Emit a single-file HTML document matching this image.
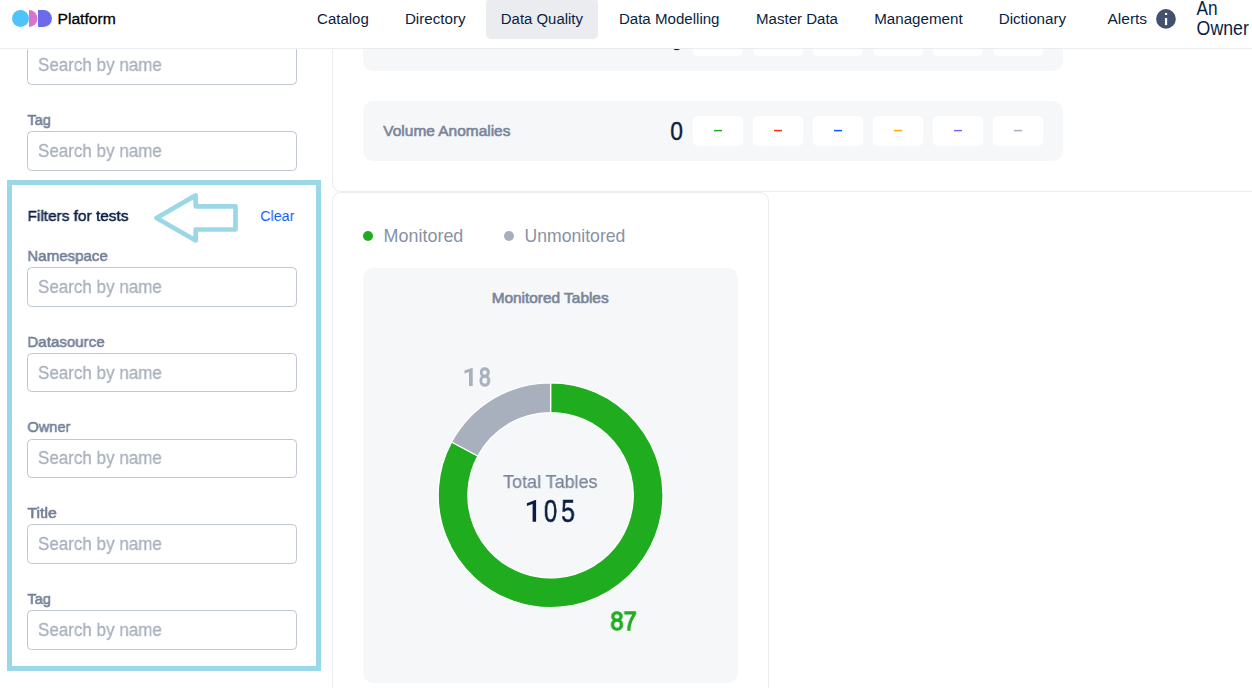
<!DOCTYPE html>
<html><head><meta charset="utf-8">
<style>
*{box-sizing:border-box;margin:0;padding:0}
html,body{width:1252px;height:688px;overflow:hidden;background:#fff}
body{font-family:"Liberation Sans",sans-serif;position:relative;color:#091E42}
.t{position:absolute;white-space:nowrap;line-height:1;transform-origin:0 0}
svg{position:absolute;left:0;top:0;overflow:visible}
#hdr{position:absolute;left:0;top:0;width:1252px;height:49px;background:#fff;border-bottom:1px solid #EBECF0}
#active{position:absolute;left:486px;top:-2px;width:112px;height:41px;background:#EBECF0;border-radius:5px}
  .inp{position:absolute;left:27px;width:270px;border:1px solid #C1C7D0;border-radius:4.5px;background:#fff}
#hl{position:absolute;left:7px;top:180px;width:314px;height:491px;border:5px solid #9AD8E8}
.card{position:absolute;border:1px solid #EBECF0;background:#fff}
.gbox{position:absolute;background:#F6F7F9;border-radius:10px}
.chip{position:absolute;top:116px;width:50px;height:30px;background:#fff;border-radius:5px}
.chip i{position:absolute;left:21px;top:13.7px;width:8px;height:1.8px;display:block}
.dot{position:absolute;width:10px;height:10px;border-radius:50%;top:231px}
</style></head><body>

<div class="card" style="left:332px;top:-20px;width:940px;height:212px;border-radius:0 0 0 9px"></div>
<div class="card" style="left:332px;top:192px;width:437px;height:520px;border-radius:9px 9px 0 0"></div>
<div class="gbox" style="left:363px;top:11px;width:700px;height:60px"></div>
<div class="chip" style="left:693px;top:26px"></div>
<div class="chip" style="left:753px;top:26px"></div>
<div class="chip" style="left:813px;top:26px"></div>
<div class="chip" style="left:873px;top:26px"></div>
<div class="chip" style="left:933px;top:26px"></div>
<div class="chip" style="left:993px;top:26px"></div>
<div class="t" style="left:670px;top:28px;font-size:26px;color:#091E42;transform:translate(0.18px,0px) scaleX(0.8766);-webkit-text-stroke:0.4px #091E42;">0</div>
<div class="gbox" style="left:363px;top:101px;width:700px;height:60px"></div>
<div class="t" style="left:383px;top:124px;font-size:14.9px;color:#7A869A;transform:translate(0.31px,-0.2px) scaleX(1.0377);-webkit-text-stroke:0.6px #7A869A;">Volume Anomalies</div>
<div class="t" style="left:670px;top:118px;font-size:26px;color:#091E42;transform:translate(0.18px,0px) scaleX(0.8766);-webkit-text-stroke:0.4px #091E42;">0</div>
<div class="chip" style="left:693px"></div>
<div class="chip" style="left:753px"></div>
<div class="chip" style="left:813px"></div>
<div class="chip" style="left:873px"></div>
<div class="chip" style="left:933px"></div>
<div class="chip" style="left:993px"></div>
<svg width="1252" height="200" viewBox="0 0 1252 200"><rect x="714" y="129.85" width="8" height="1.5" fill="#1FAD1F"/><rect x="774" y="129.85" width="8" height="1.5" fill="#F2330D"/><rect x="834" y="129.85" width="8" height="1.5" fill="#0B5CFF"/><rect x="894" y="129.85" width="8" height="1.5" fill="#FFAA00"/><rect x="954" y="129.85" width="8" height="1.5" fill="#8066FF"/><rect x="1014" y="129.85" width="8" height="1.5" fill="#A8B0BD"/></svg>
<div class="dot" style="left:363px;background:#1FAD1F"></div>
<div class="t" style="left:383px;top:226px;font-size:19px;color:#8792A5;transform:translate(0.60px,0px) scaleX(0.9437);">Monitored</div>
<div class="dot" style="left:504px;background:#A8B0BD"></div>
<div class="t" style="left:524px;top:226px;font-size:19px;color:#8792A5;transform:translate(0.60px,0px) scaleX(0.9258);">Unmonitored</div>
<div class="gbox" style="left:363px;top:268px;width:375px;height:415px"></div>
<div class="t" style="left:491px;top:291px;font-size:14.9px;color:#7A869A;transform:translate(0.64px,0px) scaleX(1.0341);-webkit-text-stroke:0.65px #7A869A;">Monitored Tables</div>
<svg width="1252" height="688" viewBox="0 0 1252 688"><path d="M550.60 382.80 A112.4 112.4 0 1 1 451.62 441.94 L477.77 456.01 A82.7 82.7 0 1 0 550.60 412.50 Z" fill="#1FAD1F" stroke="#fff" stroke-width="1.25"/><path d="M550.60 382.80 A112.4 112.4 0 0 0 451.62 441.94 L477.77 456.01 A82.7 82.7 0 0 1 550.60 412.50 Z" fill="#A8B0BD" stroke="#fff" stroke-width="1.25"/></svg>
<svg width="1252" height="688" viewBox="0 0 1252 688"><polygon points="472.7,385.9 469,385.9 469,372 464.5,373.6 464.5,370.6 471.8,367.9 472.7,367.9" fill="#A8B0BD"/><polygon points="536.1,521.8 532.6,521.8 532.6,503.9 526.9,505.9 526.9,503.2 535.2,499.9 536.1,499.9" fill="#091E42"/></svg>
<div class="t" style="left:479px;top:365px;font-size:25px;color:#A8B0BD;transform:translate(0.04px,0px) scaleX(0.8237);-webkit-text-stroke:1.3px #A8B0BD;will-change:transform;">8</div>
<div class="t" style="left:610px;top:609px;font-size:25px;color:#1FAD1F;transform:translate(0.41px,0px) scaleX(0.9398);-webkit-text-stroke:1.3px #1FAD1F;will-change:transform;">87</div>
<div class="t" style="left:503px;top:473px;font-size:18.6px;color:#7A869A;transform:translate(0.12px,0px) scaleX(0.9646);-webkit-text-stroke:0.25px #7A869A;will-change:transform;">Total Tables</div>
<div class="t" style="left:543px;top:496px;font-size:31.5px;color:#091E42;transform:translate(0.91px,0px) scaleX(0.7597);-webkit-text-stroke:0.55px #091E42;will-change:transform;">0</div>
<div class="t" style="left:561px;top:496px;font-size:31.5px;color:#091E42;transform:translate(0.12px,0px) scaleX(0.7875);-webkit-text-stroke:0.55px #091E42;will-change:transform;">5</div>
<div class="inp" style="top:45px;height:40px"></div>
<div class="t" style="left:37px;top:56px;font-size:18.6px;color:#A8B0BD;transform:translate(0.94px,0px) scaleX(0.9152);-webkit-text-stroke:0.3px #A8B0BD;will-change:transform;">Search by name</div>
<div class="inp" style="top:131px;height:40px"></div>
<div class="t" style="left:37px;top:142px;font-size:18.6px;color:#A8B0BD;transform:translate(0.94px,0px) scaleX(0.9152);-webkit-text-stroke:0.3px #A8B0BD;will-change:transform;">Search by name</div>
<div class="inp" style="top:267px;height:40px"></div>
<div class="t" style="left:37px;top:278px;font-size:18.6px;color:#A8B0BD;transform:translate(0.94px,0px) scaleX(0.9152);-webkit-text-stroke:0.3px #A8B0BD;will-change:transform;">Search by name</div>
<div class="inp" style="top:353px;height:39px"></div>
<div class="t" style="left:37px;top:364px;font-size:18.6px;color:#A8B0BD;transform:translate(0.94px,0px) scaleX(0.9152);-webkit-text-stroke:0.3px #A8B0BD;will-change:transform;">Search by name</div>
<div class="inp" style="top:439px;height:39px"></div>
<div class="t" style="left:37px;top:449px;font-size:18.6px;color:#A8B0BD;transform:translate(0.94px,0px) scaleX(0.9152);-webkit-text-stroke:0.3px #A8B0BD;will-change:transform;">Search by name</div>
<div class="inp" style="top:524px;height:40px"></div>
<div class="t" style="left:37px;top:535px;font-size:18.6px;color:#A8B0BD;transform:translate(0.94px,0px) scaleX(0.9152);-webkit-text-stroke:0.3px #A8B0BD;will-change:transform;">Search by name</div>
<div class="inp" style="top:610px;height:40px"></div>
<div class="t" style="left:37px;top:621px;font-size:18.6px;color:#A8B0BD;transform:translate(0.94px,0px) scaleX(0.9152);-webkit-text-stroke:0.3px #A8B0BD;will-change:transform;">Search by name</div>
<div class="t" style="left:27px;top:112px;font-size:15.4px;color:#727F97;transform:translate(0.38px,0px) scaleX(0.9490);-webkit-text-stroke:0.6px #727F97;will-change:transform;">Tag</div>
<div id="hl"></div>
<div class="t" style="left:27px;top:208px;font-size:15.5px;color:#091E42;transform:translate(0.55px,0px) scaleX(0.9921);-webkit-text-stroke:0.5px #091E42;will-change:transform;">Filters for tests</div>
<div class="t" style="left:260px;top:208px;font-size:15.5px;color:#0B5CFF;transform:translate(0.40px,0px) scaleX(0.9178);will-change:transform;">Clear</div>
<svg width="340" height="260" viewBox="0 0 340 260"><path d="M156.5 218 L195.7 195.4 L195.7 206.3 L235.5 206.3 L235.5 229.5 L195.7 229.5 L195.7 240.5 Z" fill="none" stroke="#9AD8E8" stroke-width="4.7" stroke-linejoin="round"/></svg>
<div class="t" style="left:27px;top:248px;font-size:15.4px;color:#727F97;transform:translate(0.39px,0px) scaleX(0.9800);-webkit-text-stroke:0.6px #727F97;will-change:transform;">Namespace</div>
<div class="t" style="left:27px;top:334px;font-size:15.4px;color:#727F97;transform:translate(0.39px,0px) scaleX(0.9815);-webkit-text-stroke:0.6px #727F97;will-change:transform;">Datasource</div>
<div class="t" style="left:27px;top:419px;font-size:15.4px;color:#727F97;transform:translate(0.38px,0px) scaleX(0.9488);-webkit-text-stroke:0.6px #727F97;will-change:transform;">Owner</div>
<div class="t" style="left:27px;top:505px;font-size:15.4px;color:#727F97;transform:translate(0.41px,0px) scaleX(1.0347);-webkit-text-stroke:0.6px #727F97;will-change:transform;">Title</div>
<div class="t" style="left:27px;top:591px;font-size:15.4px;color:#727F97;transform:translate(0.38px,0px) scaleX(0.9490);-webkit-text-stroke:0.6px #727F97;will-change:transform;">Tag</div>
<div id="hdr"><div id="active"></div>
<svg style="left:12px;top:10px" width="40" height="18" viewBox="0 0 40 18">
<circle cx="8.5" cy="8.5" r="8.5" fill="#4FC3FD"/>
<path d="M17 0 A8.5 8.5 0 0 1 17 17 Z" fill="#D873D0"/>
<path d="M26 0 H31.5 A8.5 8.5 0 0 1 31.5 17 H26 Z" fill="#6B6BEB"/></svg>
<div class="t" style="left:57px;top:11px;font-size:15.5px;color:#000;transform:translate(0.45px,-0.35px) scaleX(1.0114);-webkit-text-stroke:0.3px #000;">Platform</div>
<div class="t" style="left:317px;top:11px;font-size:15.5px;color:#091E42;transform:translate(0.10px,0px) scaleX(0.9663);">Catalog</div>
<div class="t" style="left:404px;top:11px;font-size:15.5px;color:#091E42;transform:translate(0.90px,0px) scaleX(0.9774);">Directory</div>
<div class="t" style="left:500px;top:11px;font-size:15.5px;color:#091E42;transform:translate(0.80px,0px) scaleX(0.9633);">Data Quality</div>
<div class="t" style="left:618px;top:11px;font-size:15.5px;color:#091E42;transform:translate(0.90px,0px) scaleX(0.9731);">Data Modelling</div>
<div class="t" style="left:756px;top:11px;font-size:15.5px;color:#091E42;transform:translate(0.10px,0px) scaleX(0.9695);">Master Data</div>
<div class="t" style="left:874px;top:11px;font-size:15.5px;color:#091E42;transform:translate(0.20px,0px) scaleX(0.9774);">Management</div>
<div class="t" style="left:998px;top:11px;font-size:15.5px;color:#091E42;transform:translate(0.70px,0px) scaleX(0.9783);">Dictionary</div>
<div class="t" style="left:1107px;top:11px;font-size:15.5px;color:#091E42;transform:translate(0.50px,0px) scaleX(0.9999);">Alerts</div>
<svg style="left:1156px;top:9px" width="20" height="20" viewBox="0 0 20 20">
<circle cx="9.95" cy="9.9" r="9.85" fill="#42526E"/>
<rect x="8.95" y="3.95" width="2.2" height="2" fill="#fff"/><rect x="8.95" y="9.05" width="2.2" height="7.05" fill="#fff"/></svg>
<div class="t" style="left:1196px;top:-1px;font-size:19.4px;color:#091E42;transform:translate(0.60px,0px) scaleX(0.8879);">An</div>
<div class="t" style="left:1196px;top:19px;font-size:19.4px;color:#091E42;transform:translate(0.60px,0px) scaleX(0.9137);">Owner</div>
</div>
</body></html>
